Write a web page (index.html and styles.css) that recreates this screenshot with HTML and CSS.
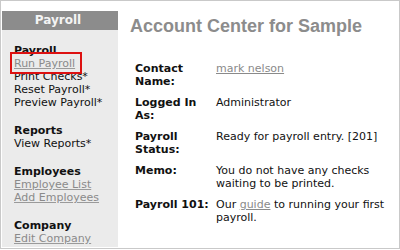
FILE: index.html
```html
<!DOCTYPE html>
<html>
<head>
<meta charset="utf-8">
<link rel="stylesheet" href="styles.css">
</head>
<body>
<div class="frame">
  <aside class="sidebar">
    <div class="side-head">Payroll</div>
    <div class="side-body">
      <div class="group">
        <div class="group-title">Payroll</div>
        <a class="side-link" href="#">Run Payroll</a>
        <div class="side-item">Print Checks*</div>
        <div class="side-item">Reset Payroll*</div>
        <div class="side-item">Preview Payroll*</div>
        <span class="highlight"></span>
      </div>
      <div class="group">
        <div class="group-title">Reports</div>
        <div class="side-item">View Reports*</div>
      </div>
      <div class="group">
        <div class="group-title">Employees</div>
        <a class="side-link" href="#">Employee List</a>
        <a class="side-link" href="#">Add Employees</a>
      </div>
      <div class="group">
        <div class="group-title">Company</div>
        <a class="side-link" href="#">Edit Company</a>
      </div>
    </div>
  </aside>
  <main class="main">
    <h1 class="title">Account Center for Sample</h1>
    <dl class="info">
      <dt>Contact<br>Name:</dt>
      <dd><a class="link" href="#">mark nelson</a></dd>
      <dt>Logged In<br>As:</dt>
      <dd>Administrator</dd>
      <dt>Payroll<br>Status:</dt>
      <dd>Ready for payroll entry. [201]</dd>
      <dt>Memo:</dt>
      <dd>You do not have any checks<br>waiting to be printed.</dd>
      <dt>Payroll 101:</dt>
      <dd><span>Our <a class="link" href="#">guide</a> to running your first</span><br><span>payroll.</span></dd>
    </dl>
  </main>
</div>
</body>
</html>
```

FILE: styles.css
```css
html, body {
  margin: 0;
  padding: 0;
  background: #ffffff;
}

.frame {
  box-sizing: border-box;
  width: 400px;
  height: 249px;
  border: 1px solid #c9c9c9;
  display: flex;
  font-family: "DejaVu Sans", Verdana, sans-serif;
  font-size: 11px;
  line-height: 13px;
  color: #111;
}

.sidebar {
  width: 116px;
  margin: 10px 0 1px 1px;
  background: #ebebeb;
  display: flex;
  flex-direction: column;
}

.side-head {
  height: 19px;
  line-height: 19px;
  background: #8c8c8c;
  color: #f4f4f4;
  font-weight: bold;
  font-size: 12px;
  text-align: center;
  padding-right: 4px;
}

.side-body {
  padding: 14px 0 0 12px;
  display: flex;
  flex-direction: column;
  gap: 15px;
}

.group {
  position: relative;
  display: flex;
  flex-direction: column;
}

.group-title {
  font-weight: bold;
  color: #111;
}

.side-item {
  color: #111;
}

.side-link {
  color: #8a8a8a;
  text-decoration: underline;
  text-decoration-color: #9a9a9a;
}

.highlight {
  position: absolute;
  left: -4px;
  top: 8px;
  width: 68px;
  height: 18px;
  border: 2px solid #dd1111;
}

.main {
  flex: 1;
  padding: 14px 0 0 12px;
}

.title {
  margin: 0;
  font-family: "Liberation Sans", Arial, sans-serif;
  font-size: 18px;
  line-height: 22px;
  font-weight: bold;
  color: #8c8c8c;
}

.info {
  margin: 25px 0 0 5px;
  display: grid;
  grid-template-columns: 81px 176px;
  row-gap: 8px;
}

.info dt {
  font-weight: bold;
  color: #111;
  white-space: nowrap;
}

.info dd {
  margin: 0;
  color: #111;
  white-space: nowrap;
}

.link {
  color: #8a8a8a;
  text-decoration: underline;
}
```
